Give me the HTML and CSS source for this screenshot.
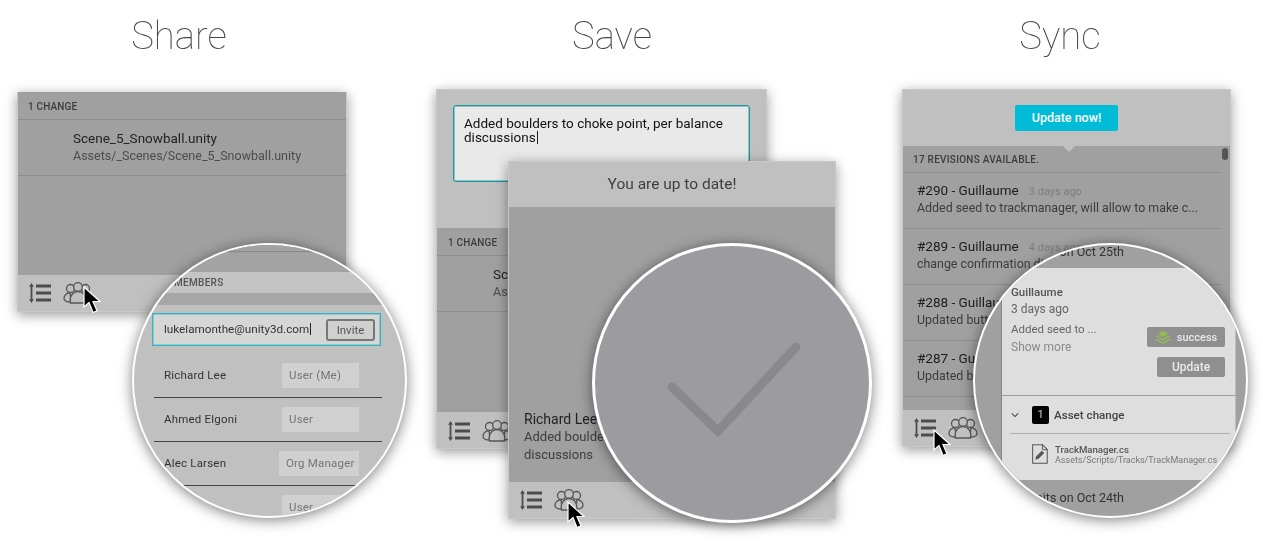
FILE: index.html
```html
<!DOCTYPE html>
<html lang="en">
<head>
    <meta charset="UTF-8">
    <meta name="viewport" content="width=device-width, initial-scale=1.0">
    <title>Share, Save, Sync</title>
    <link rel="stylesheet" href="styles.css">
</head>
<body>
    <svg class="icon-defs" aria-hidden="true">
        <symbol id="icon-list" viewBox="0 0 22 20">
            <path d="M2.5 2v16" fill="none" stroke="#4c4c4c" stroke-width="1.800"/>
            <path d="M2.5 0l2.400 3.800H.1zM2.500 20l2.400-3.800H.1z" fill="#4c4c4c"/>
            <path d="M7 3h15M7 10h15M7 17h15" fill="none" stroke="#4c4c4c" stroke-width="2.800"/>
        </symbol>
        <symbol id="icon-group" viewBox="0 0 30 22">
            <g fill="#c0c0c0" stroke="#555" stroke-width="1.300">
                <circle cx="7.500" cy="6.500" r="4"/>
                <circle cx="22.500" cy="6.500" r="4"/>
                <path d="M7 10.500C3.500 11 1 13.500 1 16.500c0 2.500 2.500 3.500 7 3.500z"/>
                <path d="M23 10.500c3.500.5 6 3 6 6 0 2.500-2.500 3.500-7 3.500z"/>
                <circle cx="15" cy="5" r="4.300"/>
                <path d="M7.500 21c-1.500-6.500 2.500-11.500 7.500-11.500S24 14.500 22.500 21z"/>
            </g>
        </symbol>
        <symbol id="icon-cursor" viewBox="0 0 18 28">
            <path d="M1 1v20l5-4.500L10 26.500l4-1.700-4-9.300h7z" fill="#000" stroke="#fff" stroke-width="1.200"/>
        </symbol>
    </svg>

    <main class="features">
        <!-- Share -->
        <section class="feature feature-share">
            <h1 class="feature-title">Share</h1>
            <div class="panel panel-share">
                <div class="section-label">1 CHANGE</div>
                <div class="change-row">
                    <div class="change-name">Scene_5_Snowball.unity</div>
                    <div class="change-path">Assets/_Scenes/Scene_5_Snowball.unity</div>
                </div>
                <div class="panel-fill"></div>
                <div class="panel-footer">
                    <svg class="icon-list"><use href="#icon-list"/></svg>
                    <svg class="icon-group"><use href="#icon-group"/></svg>
                </div>
            </div>
            <svg class="cursor cursor-share"><use href="#icon-cursor"/></svg>

            <div class="lens lens-share">
                <div class="lens-strip"></div>
                <div class="members-bar">MEMBERS</div>
                <div class="members-gap"></div>
                <div class="invite-box">
                    <span class="invite-text">lukelamonthe@unity3d.com<span class="caret"></span></span>
                    <span class="invite-btn">Invite</span>
                </div>
                <div class="member-list">
                    <div class="member-row"><span class="member-name">Richard Lee</span><span class="role">User (Me)</span></div>
                    <div class="member-row"><span class="member-name">Ahmed Elgoni</span><span class="role">User</span></div>
                    <div class="member-row"><span class="member-name">Alec Larsen</span><span class="role role-wide">Org Manager</span></div>
                    <div class="member-row"><span class="member-name"></span><span class="role">User</span></div>
                </div>
            </div>
        </section>

        <!-- Save -->
        <section class="feature feature-save">
            <h1 class="feature-title">Save</h1>
            <div class="panel panel-save">
                <div class="commit-area">
                    <div class="commit-box">Added boulders to choke point, per balance discussions<span class="caret"></span></div>
                </div>
                <div class="section-label">1 CHANGE</div>
                <div class="change-row">
                    <div class="change-name">Scene_5_Snowball.unity</div>
                    <div class="change-path">Assets/_Scenes/Scene_5_Snowball.unity</div>
                </div>
                <div class="panel-fill"></div>
                <div class="panel-footer panel-footer-save">
                    <svg class="icon-list"><use href="#icon-list"/></svg>
                    <svg class="icon-group"><use href="#icon-group"/></svg>
                </div>
            </div>

            <div class="panel panel-uptodate">
                <div class="uptodate-head">You are up to date!</div>
                <div class="uptodate-body">
                    <div class="uptodate-name">Richard Lee</div>
                    <div class="uptodate-msg">Added boulders to choke point, per balance discussions</div>
                </div>
                <div class="panel-footer">
                    <svg class="icon-list"><use href="#icon-list"/></svg>
                    <svg class="icon-group"><use href="#icon-group"/></svg>
                </div>
            </div>
            <svg class="cursor cursor-save"><use href="#icon-cursor"/></svg>

            <div class="lens lens-save">
                <svg class="check" viewBox="0 0 274 274">
                    <path d="M77 141l46 44 78-84" fill="none" stroke="#89898d" stroke-width="9" stroke-linecap="round"/>
                </svg>
            </div>
        </section>

        <!-- Sync -->
        <section class="feature feature-sync">
            <h1 class="feature-title">Sync</h1>
            <div class="panel panel-sync">
                <div class="update-area"><span class="update-btn">Update now!</span></div>
                <div class="section-label section-label-sync">17 REVISIONS AVAILABLE.</div>
                <div class="rev-list">
                    <div class="rev-row">
                        <div class="rev-head"><b>#290 - Guillaume</b><span>3 days ago</span></div>
                        <div class="rev-msg">Added seed to trackmanager, will allow to make c...</div>
                    </div>
                    <div class="rev-row">
                        <div class="rev-head"><b>#289 - Guillaume</b><span>4 days ago</span></div>
                        <div class="rev-msg">change confirmation dialog</div>
                    </div>
                    <div class="rev-row">
                        <div class="rev-head"><b>#288 - Guillaume</b><span>4 days ago</span></div>
                        <div class="rev-msg">Updated button states</div>
                    </div>
                    <div class="rev-row">
                        <div class="rev-head"><b>#287 - Guillaume</b><span>4 days ago</span></div>
                        <div class="rev-msg">Updated button states</div>
                    </div>
                    <div class="rev-row">
                        <div class="rev-head"><b>#286 - Guillaume</b><span>4 days ago</span></div>
                    </div>
                </div>
                <div class="scroll-thumb"></div>
                <div class="panel-footer">
                    <svg class="icon-list"><use href="#icon-list"/></svg>
                    <svg class="icon-group"><use href="#icon-group"/></svg>
                </div>
            </div>
            <svg class="cursor cursor-sync"><use href="#icon-cursor"/></svg>

            <div class="lens lens-sync">
                <div class="day-label day-label-top">2 commits on Oct 25th</div>
                <div class="detail-card">
                    <div class="detail-main">
                        <div class="detail-text">
                            <div class="detail-author">Guillaume</div>
                            <div class="detail-when">3 days ago</div>
                            <div class="detail-msg">Added seed to ...</div>
                            <div class="detail-more">Show more</div>
                        </div>
                        <div class="detail-actions">
                            <span class="chip chip-success">
                                <svg class="layers" viewBox="0 0 16 13">
                                    <path d="M8 0l5 3-5 3-5-3z" fill="#93c04a"/>
                                    <path d="M2 4.500l6 3.500 6-3.500 1 1L8 9.500 1 5.500z" fill="#93c04a"/>
                                    <path d="M1 7.500l7 4 7-4 1 1L8 13 0 8.500z" fill="#93c04a"/>
                                </svg>
                                success
                            </span>
                            <span class="chip chip-update">Update</span>
                        </div>
                    </div>
                    <div class="asset-row">
                        <svg class="chevron" viewBox="0 0 10 6"><path d="M1 1l4 4 4-4" fill="none" stroke="#444" stroke-width="1.300"/></svg>
                        <span class="asset-count">1</span>
                        <span class="asset-title">Asset change</span>
                    </div>
                    <div class="file-row">
                        <svg class="file-icon" viewBox="0 0 17 21">
                            <path d="M.7.7h10.500l5 5v14.600H.7z" fill="none" stroke="#555" stroke-width="1.100"/>
                            <path d="M11 .7v5.200h5.200" fill="none" stroke="#555" stroke-width="1"/>
                            <path d="M3.500 16.500l1-3.500 6-6 2.500 2.500-6 6z" fill="#555"/>
                        </svg>
                        <div>
                            <div class="file-name">TrackManager.cs</div>
                            <div class="file-path">Assets/Scripts/Tracks/TrackManager.cs</div>
                        </div>
                    </div>
                </div>
                <div class="day-label">2 commits on Oct 24th</div>
            </div>
        </section>
    </main>
</body>
</html>
```

FILE: styles.css
```css
* {
    box-sizing: border-box;
}
body {
    margin: 0;
    background: #fff;
    font-family: Roboto, "Liberation Sans", sans-serif;
    overflow: hidden;
}
.icon-defs {
    display: none;
}
.features {
    display: grid;
    grid-template-columns: 358px 508px 388px;
    width: 1263px;
    height: 541px;
    filter: blur(0.35px);
}
.feature {
    position: relative;
}
.feature-title {
    margin: 0;
    height: 89px;
    padding-top: 13px;
    font-size: 38.3px;
    line-height: 46px;
    font-weight: 100;
    text-align: center;
    color: #444;
}

/* panels */
.panel {
    display: flex;
    flex-direction: column;
    position: relative;
    background: #a0a0a0;
    border: 1px solid #c9c9c9;
    box-shadow: 0 3px 12px rgba(0, 0, 0, 0.4);
    overflow: hidden;
}
.panel-share {
    width: 330px;
    height: 220px;
    margin: 3px 0 0 17px;
    border-top: 0;
}
.panel-share .section-label {
    padding-left: 10px;
}
.panel-share .change-row {
    padding-left: 55px;
}
.panel-save {
    width: 331px;
    height: 360px;
    margin-left: 78px;
}
.panel-uptodate {
    position: absolute;
    left: 150px;
    top: 161px;
    width: 328px;
    height: 358px;
}
.panel-sync {
    width: 329px;
    height: 358px;
    margin-left: 36px;
}
.panel-fill {
    flex: 1;
}
.panel-footer {
    display: flex;
    align-items: center;
    flex: none;
    height: 36px;
    padding-left: 11px;
    gap: 12px;
    background: #c0c0c0;
}
.panel-footer-save {
    padding-top: 2px;
}
.icon-list {
    width: 22px;
    height: 20px;
}
.icon-group {
    width: 30px;
    height: 22px;
}
.cursor {
    position: absolute;
    width: 18px;
    height: 28px;
}
.cursor-share {
    left: 83px;
    top: 286px;
}
.cursor-save {
    left: 209px;
    top: 501px;
}
.cursor-sync {
    left: 67px;
    top: 429px;
}
.section-label {
    flex: none;
    height: 28px;
    padding-left: 11px;
    font-size: 10px;
    font-weight: 500;
    line-height: 30px;
    letter-spacing: 0.15px;
    color: #3c3c3c;
    border-bottom: 1px solid #8f8f8f;
}
.change-row {
    flex: none;
    height: 56px;
    padding: 9px 0 0 56px;
    border-bottom: 1px solid #8f8f8f;
}
.change-name {
    font-size: 13.5px;
    line-height: 18px;
    color: #222;
}
.change-path {
    font-size: 12.5px;
    line-height: 18px;
    color: #4c4c4c;
}

/* save */
.commit-area {
    flex: none;
    height: 138px;
    padding: 15px 16px 0;
    background: #c0c0c0;
}
.commit-box {
    height: 77px;
    padding: 10px 10px;
    font-size: 13.5px;
    line-height: 14px;
    color: #111;
    background: #e9e9e9;
    border: 1px solid #1f959c;
    border-radius: 3px;
    box-shadow: inset 0 0 0 1px rgba(31, 149, 156, 0.45);
}
.caret {
    display: inline-block;
    width: 1px;
    height: 13px;
    margin-left: 1px;
    vertical-align: -2px;
    background: #222;
}
.uptodate-head {
    flex: none;
    height: 45px;
    font-size: 15.5px;
    line-height: 44px;
    text-align: center;
    color: #3f3f3f;
    background: #c0c0c0;
}
.uptodate-body {
    flex: 1;
    display: flex;
    flex-direction: column;
    justify-content: flex-end;
    padding: 0 0 18px 15px;
}
.uptodate-name {
    font-size: 14px;
    line-height: 18px;
    color: #222;
}
.uptodate-msg {
    width: 285px;
    font-size: 13px;
    line-height: 18px;
    color: #3c3c3c;
}

/* sync */
.update-area {
    flex: none;
    display: flex;
    justify-content: center;
    position: relative;
    height: 56px;
    padding-top: 15px;
    background: #c0c0c0;
}
.update-area::after {
    content: "";
    position: absolute;
    left: 160px;
    top: 56px;
    border: 6px solid transparent;
    border-top-color: #c0c0c0;
    z-index: 1;
}
.update-btn {
    width: 103px;
    height: 26px;
    font-size: 12.5px;
    font-weight: 500;
    line-height: 26px;
    text-align: center;
    color: #fff;
    background: #00bcd6;
    border-radius: 2px;
}
.section-label-sync {
    height: 27px;
    line-height: 27px;
    width: 318px;
    padding-left: 10px;
    letter-spacing: 0.25px;
}
.rev-list {
    flex: 1;
    overflow: hidden;
}
.rev-row {
    width: 318px;
    height: 56px;
    padding: 8px 0 0 14px;
    border-bottom: 1px solid #8f8f8f;
}
.rev-head {
    font-size: 11px;
    line-height: 18px;
    color: #7d7d7d;
}
.rev-head b {
    margin-right: 10px;
    font-size: 13.5px;
    font-weight: 400;
    color: #1c1c1c;
}
.rev-msg {
    margin-top: -1px;
    font-size: 12.4px;
    line-height: 16px;
    color: #3c3c3c;
}
.scroll-thumb {
    position: absolute;
    left: 319px;
    top: 58px;
    width: 6px;
    height: 12px;
    background: #555;
    border-radius: 3px;
}

/* magnified circles */
.lens {
    position: absolute;
    top: 243px;
    width: 275px;
    height: 275px;
    border: 2px solid #fff;
    border-radius: 50%;
    overflow: hidden;
    box-shadow: 0 2px 14px rgba(0, 0, 0, 0.5);
}
.lens-share {
    left: 132px;
    background: #c0c0c0;
}
.lens-save {
    left: 234px;
    width: 280px;
    height: 280px;
    border-width: 3px;
    background: #9c9ca0;
}
.lens-sync {
    left: 107px;
    background: #a0a0a0;
}
.check {
    display: block;
    width: 100%;
    height: 100%;
}
.lens-strip {
    height: 27px;
    background: #a3a3a3;
    border-top: 6px solid #a3a3a3;
    box-shadow: inset 0 1px 1px #858585;
}
.members-bar {
    height: 21px;
    padding-left: 40px;
    font-size: 10px;
    font-weight: 500;
    line-height: 21px;
    letter-spacing: 0.3px;
    color: #555;
    background: #c4c4c4;
}
.members-gap {
    height: 12px;
    background: #a6a6a6;
}
.invite-box {
    display: flex;
    align-items: center;
    justify-content: space-between;
    width: 229px;
    height: 33px;
    margin: 8px 0 8px 18px;
    padding: 0 5px 2px 11px;
    background: #d6d6d6;
    border: 1px solid #2fb4c4;
    box-shadow: inset 0 0 0 1px rgba(47, 180, 196, 0.4);
}
.invite-text {
    font-size: 11.7px;
    color: #333;
}
.invite-text .caret {
    height: 12px;
}
.invite-btn {
    width: 49px;
    height: 22px;
    margin-bottom: -2px;
    font-size: 11.5px;
    line-height: 18px;
    text-align: center;
    color: #555;
    background: #d0d0d0;
    border: 2px solid #777;
    border-radius: 3px;
}
.member-row {
    display: flex;
    align-items: center;
    justify-content: space-between;
    width: 228px;
    height: 44px;
    margin-left: 20px;
    padding: 0 23px 0 10px;
    font-size: 11.5px;
    letter-spacing: 0.2px;
    color: #333;
    border-bottom: 1px solid #444;
}
.member-name {
    margin-top: -2px;
}
.role {
    width: 77px;
    height: 25px;
    padding-left: 7px;
    line-height: 24px;
    color: #757575;
    background: #d0d0d0;
}
.role-wide {
    width: 80px;
}
.day-label {
    width: 149px;
    font-size: 12.5px;
    line-height: 17px;
    text-align: right;
    color: #333;
    padding-top: 9px;
}
.day-label-top {
    height: 26px;
    padding-top: 1px;
    margin-top: -3px;
}
.detail-card {
    display: flex;
    flex-direction: column;
    width: 235px;
    height: 212px;
    margin-left: 26px;
    background: #dedede;
    border-left: 1px solid #848484;
    border-right: 1px solid #bdbdbd;
}
.detail-main {
    display: flex;
    justify-content: space-between;
    flex: none;
    height: 128px;
    padding: 16px 10px 18px 9px;
    border-bottom: 1px solid #9c9c9c;
}
.detail-author {
    font-size: 11.5px;
    font-weight: 500;
    line-height: 16px;
    color: #555;
}
.detail-when {
    margin-top: 1px;
    font-size: 12px;
    line-height: 17px;
    color: #666;
}
.detail-msg {
    margin-top: 2px;
    font-size: 11.5px;
    line-height: 18px;
    color: #666;
}
.detail-more {
    font-size: 12px;
    line-height: 18px;
    color: #8a8a8a;
}
.detail-actions {
    display: flex;
    flex-direction: column;
    justify-content: flex-end;
    align-items: flex-end;
    gap: 10px;
}
.chip {
    display: flex;
    align-items: center;
    justify-content: center;
    height: 20px;
    font-size: 11.5px;
    font-weight: 500;
    color: #e8e8e8;
    background: #8f8f8f;
    border-radius: 2px;
}
.chip-success {
    width: 78px;
    gap: 6px;
    font-size: 11px;
}
.chip-update {
    width: 68px;
    font-size: 12px;
}
.layers {
    width: 16px;
    height: 13px;
}
.asset-row {
    display: flex;
    align-items: center;
    flex: none;
    height: 38px;
    margin-left: 8px;
    margin-right: 5px;
    border-bottom: 1px solid #b0b0b0;
}
.chevron {
    width: 8px;
    height: 6px;
    margin-left: 1px;
}
.asset-count {
    width: 17px;
    height: 18px;
    margin: 0 5px 0 13px;
    font-size: 11px;
    line-height: 18px;
    text-align: center;
    color: #ccc;
    background: #000;
    border-radius: 2px;
}
.asset-title {
    font-size: 11.6px;
    font-weight: 500;
    color: #444;
}
.file-row {
    display: flex;
    align-items: center;
    gap: 7px;
    height: 40px;
    padding-left: 30px;
}
.file-icon {
    width: 16px;
    height: 20px;
}
.file-name {
    font-size: 9.6px;
    font-weight: 500;
    line-height: 11px;
    color: #555;
}
.file-path {
    font-size: 9px;
    line-height: 10px;
    color: #777;
}
```
